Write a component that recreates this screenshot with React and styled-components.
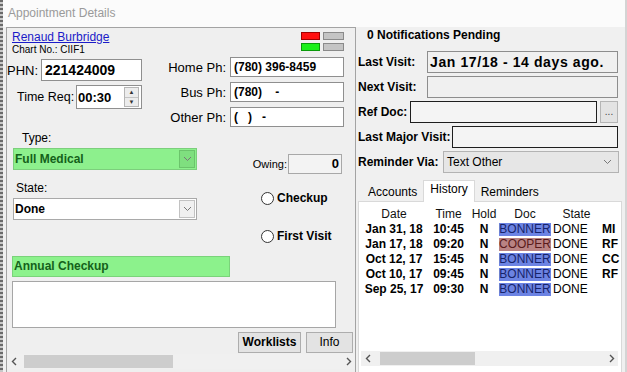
import React from "react";
import styled, { createGlobalStyle } from "styled-components";

const GlobalStyle = createGlobalStyle`
  html, body {
    margin: 0;
    padding: 0;
    background: #f0f0f0;
  }
  body {
    font-family: "Liberation Sans", Arial, sans-serif;
    color: #000;
  }
`;

const visits = [
  { date: "Jan 31, 18", time: "10:45", hold: "N", doc: "BONNER", state: "DONE", more: "MI" },
  { date: "Jan 17, 18", time: "09:20", hold: "N", doc: "COOPER", state: "DONE", more: "RF" },
  { date: "Oct 12, 17", time: "15:45", hold: "N", doc: "BONNER", state: "DONE", more: "CC" },
  { date: "Oct 10, 17", time: "09:45", hold: "N", doc: "BONNER", state: "DONE", more: "RF" },
  { date: "Sep 25, 17", time: "09:30", hold: "N", doc: "BONNER", state: "DONE", more: "" }
];

const Chevron = () => (
  <svg width="9" height="6" viewBox="0 0 9 6">
    <path d="M1 1 L4.5 4.5 L8 1" fill="none" stroke="#777" strokeWidth="1" />
  </svg>
);

const Arrow = ({ dir }) => (
  <svg width="6" height="9" viewBox="0 0 6 9">
    <path
      d={dir === "left" ? "M5 1 L1.5 4.5 L5 8" : "M1 1 L4.5 4.5 L1 8"}
      fill="none"
      stroke="#555"
      strokeWidth="1.4"
    />
  </svg>
);

const Scroll = ({ thumbLeft, thumbWidth }) => (
  <ScrollBar>
    <Arrow dir="left" />
    <ScrollTrack>
      <ScrollThumb style={{ marginLeft: thumbLeft, width: thumbWidth }} />
    </ScrollTrack>
    <Arrow dir="right" />
  </ScrollBar>
);

const Select = ({ value, green, width }) => (
  <SelectBox $green={green} $width={width}>
    <SelectText $green={green}>{value}</SelectText>
    <SelectButton $green={green}>
      <Chevron />
    </SelectButton>
  </SelectBox>
);

export default function App() {
  return (
    <>
      <GlobalStyle />
      <Window>
        <EdgeStrip />
        <Main>
          <TitleBar>Appointment Details</TitleBar>
          <Body>
            <LeftPanel>
              <TopSection>
                <PatientCol>
                  <NameLink>Renaud Burbridge</NameLink>
                  <ChartNo>Chart No.: CIIF1</ChartNo>
                  <PhnRow>
                    <PhnLabel>PHN:</PhnLabel>
                    <TextInput $width={101} $height={22} $bold $size={14}>
                      221424009
                    </TextInput>
                  </PhnRow>
                  <TimeRow>
                    <TimeLabel>Time Req:</TimeLabel>
                    <TimeInput>
                      <span>00:30</span>
                      <Spinner>
                        <SpinHalf>▲</SpinHalf>
                        <SpinHalf>▼</SpinHalf>
                      </Spinner>
                    </TimeInput>
                  </TimeRow>
                </PatientCol>
                <PhoneCol>
                  <Indicators>
                    <IndicatorRow>
                      <Flag $color="#ff1010" $edge="#a00000" />
                      <Flag $color="#c4c4c4" $edge="#8a8a8a" $wide />
                    </IndicatorRow>
                    <IndicatorRow>
                      <Flag $color="#19f019" $edge="#0a9a0a" />
                      <Flag $color="#c4c4c4" $edge="#8a8a8a" $wide />
                    </IndicatorRow>
                  </Indicators>
                  <PhoneRow>
                    <PhoneLabel>Home Ph:</PhoneLabel>
                    <TextInput $width={114} $height={20} $semi>(780) 396-8459</TextInput>
                  </PhoneRow>
                  <PhoneRow>
                    <PhoneLabel>Bus Ph:</PhoneLabel>
                    <TextInput $width={114} $height={20} $semi>(780)&nbsp;&nbsp;&nbsp;&nbsp;-</TextInput>
                  </PhoneRow>
                  <PhoneRow>
                    <PhoneLabel>Other Ph:</PhoneLabel>
                    <TextInput $width={114} $height={20} $semi>(&nbsp;&nbsp;&nbsp;)&nbsp;&nbsp;&nbsp;-</TextInput>
                  </PhoneRow>
                </PhoneCol>
              </TopSection>

              <MiddleSection>
                <TypeCol>
                  <SmallLabel $indent={9}>Type:</SmallLabel>
                  <Select value="Full Medical" green width={184} />
                  <SmallLabel $indent={3} $top={11}>State:</SmallLabel>
                  <Select value="Done" width={184} />
                </TypeCol>
                <OptionCol>
                  <OwingRow>
                    <OwingLabel>Owing:</OwingLabel>
                    <OwingBox>0</OwingBox>
                  </OwingRow>
                  <RadioRow $top={17}>
                    <RadioCircle />
                    Checkup
                  </RadioRow>
                  <RadioRow $top={24}>
                    <RadioCircle />
                    First Visit
                  </RadioRow>
                </OptionCol>
              </MiddleSection>

              <AnnualBar>Annual Checkup</AnnualBar>
              <NotesBox />
              <ButtonRow>
                <WinButton $bold $width={63}>Worklists</WinButton>
                <WinButton $width={47}>Info</WinButton>
              </ButtonRow>
              <Scroll thumbLeft={2} thumbWidth={149} />
            </LeftPanel>

            <RightPanel>
              <Notifications>0 Notifications Pending</Notifications>
              <FieldList>
                <FieldRow>
                  <FieldLabel $width={69}>Last Visit:</FieldLabel>
                  <FieldBox $big>Jan 17/18 - 14 days ago.</FieldBox>
                </FieldRow>
                <FieldRow>
                  <FieldLabel $width={69}>Next Visit:</FieldLabel>
                  <FieldBox />
                </FieldRow>
                <FieldRow>
                  <FieldLabel $width={52}>Ref Doc:</FieldLabel>
                  <FieldBox $dark />
                  <DotsButton>...</DotsButton>
                </FieldRow>
                <FieldRow>
                  <FieldLabel $width={94}>Last Major Visit:</FieldLabel>
                  <FieldBox $dark />
                </FieldRow>
                <FieldRow>
                  <FieldLabel $width={85}>Reminder Via:</FieldLabel>
                  <ReminderSelect>
                    <span>Text Other</span>
                    <Chevron />
                  </ReminderSelect>
                </FieldRow>
              </FieldList>

              <TabStrip>
                <Tab>Accounts</Tab>
                <Tab $active>History</Tab>
                <Tab>Reminders</Tab>
              </TabStrip>
              <TabBody>
                <HistoryTable>
                  <HeadCell>Date</HeadCell>
                  <HeadCell>Time</HeadCell>
                  <HeadCell>Hold</HeadCell>
                  <HeadCell>Doc</HeadCell>
                  <HeadCell>State</HeadCell>
                  <HeadCell />
                  {visits.map((v) => (
                    <React.Fragment key={v.date}>
                      <Cell $bold $center>{v.date}</Cell>
                      <Cell $bold $center>{v.time}</Cell>
                      <Cell $bold $center>{v.hold}</Cell>
                      <Cell>
                        <DocBadge $cooper={v.doc === "COOPER"}>{v.doc}</DocBadge>
                      </Cell>
                      <Cell $pad>{v.state}</Cell>
                      <Cell $bold>{v.more}</Cell>
                    </React.Fragment>
                  ))}
                </HistoryTable>
                <TableScroll>
                  <Scroll thumbLeft={4} thumbWidth={95} />
                </TableScroll>
              </TabBody>
            </RightPanel>
          </Body>
        </Main>
      </Window>
    </>
  );
}

const Window = styled.div`
  width: 627px;
  height: 372px;
  display: flex;
  overflow: hidden;
  background: #f0f0f0;
  font-size: 12px;
`;

const EdgeStrip = styled.div`
  width: 3px;
  background: repeating-linear-gradient(180deg, #6a6a6a 0 2px, #c8c8c8 2px 4px);
`;

const Main = styled.div`
  flex: 1;
  display: flex;
  flex-direction: column;
  border-right: 2px solid #d4d4d4;
`;

const TitleBar = styled.div`
  height: 27px;
  line-height: 26px;
  padding-left: 5px;
  background: #fbfbfb;
  color: #9a9a9a;
  font-size: 12px;
`;

const Body = styled.div`
  flex: 1;
  display: flex;
`;

const LeftPanel = styled.div`
  margin-left: 3px;
  width: 348px;
  border: 1px solid #a3a3a3;
  border-bottom: none;
  display: flex;
  flex-direction: column;
  background: #efefef;
`;

const TopSection = styled.div`
  display: flex;
  height: 102px;
`;

const PatientCol = styled.div`
  width: 145px;
  display: flex;
  flex-direction: column;
`;

const NameLink = styled.a`
  margin: 2px 0 0 5px;
  line-height: 14px;
  font-size: 12px;
  color: #1b1bc8;
  text-decoration: underline;
`;

const ChartNo = styled.div`
  margin-left: 5px;
  font-size: 10px;
  line-height: 11px;
`;

const PhnRow = styled.div`
  margin-top: 4px;
  display: flex;
  align-items: center;
`;

const PhnLabel = styled.span`
  width: 34px;
  font-size: 13px;
`;

const TextInput = styled.div`
  box-sizing: border-box;
  width: ${(p) => p.$width}px;
  height: ${(p) => p.$height}px;
  flex-shrink: 0;
  border: 1px solid #8f8f8f;
  background: #fff;
  padding-left: 3px;
  display: flex;
  align-items: center;
  font-size: ${(p) => p.$size || 12}px;
  font-weight: ${(p) => (p.$bold ? 700 : p.$semi ? 600 : 400)};
  white-space: pre;
`;

const TimeRow = styled.div`
  margin-top: 4px;
  padding-left: 10px;
  display: flex;
  align-items: center;
`;

const TimeLabel = styled.span`
  width: 59px;
  font-size: 12.5px;
  white-space: nowrap;
`;

const TimeInput = styled.div`
  box-sizing: border-box;
  width: 66px;
  height: 24px;
  flex-shrink: 0;
  border: 1px solid #8f8f8f;
  background: #fff;
  display: flex;
  align-items: center;
  justify-content: space-between;
  padding: 0 2px 0 1px;
  font-size: 13px;
  font-weight: 700;
`;

const Spinner = styled.div`
  width: 15px;
  height: 20px;
  display: flex;
  flex-direction: column;
  border: 1px solid #b5b5b5;
  box-sizing: border-box;
`;

const SpinHalf = styled.div`
  flex: 1;
  display: flex;
  align-items: center;
  justify-content: center;
  font-size: 6px;
  color: #333;
  background: #ececec;
  & + & {
    border-top: 1px solid #c4c4c4;
  }
`;

const PhoneCol = styled.div`
  flex: 1;
  display: flex;
  flex-direction: column;
  padding-right: 11px;
`;

const Indicators = styled.div`
  margin-top: 4px;
  display: flex;
  flex-direction: column;
  align-items: flex-end;
  gap: 3px;
`;

const IndicatorRow = styled.div`
  display: flex;
  gap: 3px;
`;

const Flag = styled.div`
  box-sizing: border-box;
  width: ${(p) => (p.$wide ? 21 : 19)}px;
  height: 8px;
  background: ${(p) => p.$color};
  border: 1px solid ${(p) => p.$edge};
`;

const PhoneRow = styled.div`
  display: flex;
  justify-content: flex-end;
  align-items: center;
  margin-top: 5px;
  &:nth-of-type(2) {
    margin-top: 6px;
  }
`;

const PhoneLabel = styled.span`
  font-size: 13px;
  margin-right: 4px;
`;

const MiddleSection = styled.div`
  display: flex;
  height: 120px;
`;

const TypeCol = styled.div`
  width: 190px;
  padding-left: 6px;
  display: flex;
  flex-direction: column;
  align-items: flex-start;
`;

const SmallLabel = styled.div`
  margin: ${(p) => p.$top || 1}px 0 3px ${(p) => p.$indent}px;
  line-height: 14px;
  font-size: 12px;
`;

const SelectBox = styled.div`
  box-sizing: border-box;
  width: ${(p) => p.$width}px;
  height: 22px;
  display: flex;
  align-items: center;
  background: ${(p) => (p.$green ? "#8df08d" : "#fff")};
  border: 1px solid ${(p) => (p.$green ? "#7ccf7c" : "#a9a9a9")};
`;

const SelectText = styled.span`
  flex: 1;
  padding-left: 1px;
  font-size: 12px;
  font-weight: 700;
  color: ${(p) => (p.$green ? "#14611a" : "#000")};
`;

const SelectButton = styled.div`
  box-sizing: border-box;
  width: 16px;
  height: 18px;
  margin-right: 1px;
  display: flex;
  align-items: center;
  justify-content: center;
  background: ${(p) => (p.$green ? "#7fdf7f" : "#f0f0f0")};
  border: 1px solid ${(p) => (p.$green ? "#6bc46b" : "#c2c2c2")};
`;

const OptionCol = styled.div`
  flex: 1;
  display: flex;
  flex-direction: column;
  padding-right: 13px;
`;

const OwingRow = styled.div`
  margin-top: 24px;
  display: flex;
  justify-content: flex-end;
  align-items: center;
`;

const OwingLabel = styled.span`
  font-size: 11px;
  margin-right: 1px;
`;

const OwingBox = styled.div`
  box-sizing: border-box;
  width: 54px;
  height: 20px;
  border: 1px solid #a8a8a8;
  background: #f3f3f3;
  text-align: right;
  padding-right: 2px;
  line-height: 18px;
  font-size: 13px;
  font-weight: 700;
`;

const RadioRow = styled.div`
  margin: ${(p) => p.$top}px 0 0 58px;
  display: flex;
  align-items: center;
  gap: 3px;
  font-size: 12px;
  font-weight: 700;
  height: 14px;
`;

const RadioCircle = styled.span`
  box-sizing: border-box;
  width: 13px;
  height: 13px;
  border-radius: 50%;
  border: 1px solid #333;
  background: #fff;
`;

const AnnualBar = styled.div`
  margin: 6px 0 0 5px;
  box-sizing: border-box;
  width: 218px;
  height: 21px;
  background: #8cf28c;
  border: 1px solid #7ad37a;
  color: #14611a;
  font-size: 12px;
  font-weight: 700;
  line-height: 19px;
  padding-left: 1px;
`;

const NotesBox = styled.div`
  margin: 4px 0 0 5px;
  box-sizing: border-box;
  width: 324px;
  height: 47px;
  background: #fff;
  border: 1px solid #a6a6a6;
`;

const ButtonRow = styled.div`
  margin-top: 4px;
  display: flex;
  justify-content: flex-end;
  gap: 5px;
  padding-right: 2px;
`;

const WinButton = styled.div`
  box-sizing: border-box;
  width: ${(p) => p.$width}px;
  height: 21px;
  border: 1px solid #adadad;
  background: #e3e3e3;
  text-align: center;
  line-height: 19px;
  font-size: 12px;
  font-weight: ${(p) => (p.$bold ? 700 : 400)};
`;

const ScrollBar = styled.div`
  height: 15px;
  margin-top: 1px;
  display: flex;
  align-items: center;
  padding: 0 3px 0 4px;
  gap: 5px;
  background: #f0f0f0;
`;

const ScrollTrack = styled.div`
  flex: 1;
  height: 13px;
  display: flex;
`;

const ScrollThumb = styled.div`
  height: 13px;
  background: #cdcdcd;
`;

const RightPanel = styled.div`
  flex: 1;
  margin-left: 2px;
  margin-right: 1px;
  display: flex;
  flex-direction: column;
`;

const Notifications = styled.div`
  margin: 1px 0 0 9px;
  line-height: 14px;
  font-size: 12px;
  font-weight: 700;
`;

const FieldList = styled.div`
  margin-top: 9px;
  display: flex;
  flex-direction: column;
  gap: 3px;
  padding-right: 6px;
`;

const FieldRow = styled.div`
  display: flex;
  align-items: center;
  height: 22px;
`;

const FieldLabel = styled.span`
  width: ${(p) => p.$width}px;
  font-size: 12px;
  font-weight: 700;
  flex-shrink: 0;
`;

const FieldBox = styled.div`
  flex: 1;
  box-sizing: border-box;
  height: 22px;
  border: 1px solid ${(p) => (p.$dark ? "#1e1e1e" : "#8d8d8d")};
  background: ${(p) => (p.$dark ? "#f4f4f4" : "#f0f0f0")};
  padding-left: 2px;
  line-height: 20px;
  font-size: 14px;
  font-weight: 700;
  white-space: nowrap;
  overflow: hidden;
  letter-spacing: ${(p) => (p.$big ? "0.6px" : "0")};
`;

const DotsButton = styled.div`
  box-sizing: border-box;
  width: 18px;
  height: 22px;
  margin-left: 3px;
  border: 1px solid #b5b5b5;
  background: #e3e3e3;
  text-align: center;
  line-height: 19px;
  font-size: 10px;
  color: #444;
`;

const ReminderSelect = styled.div`
  flex: 1;
  box-sizing: border-box;
  height: 22px;
  border: 1px solid #b3b3b3;
  background: #e6e6e6;
  display: flex;
  align-items: center;
  justify-content: space-between;
  padding: 0 6px 0 3px;
  font-size: 12px;
  margin-right: -1px;
`;

const TabStrip = styled.div`
  margin-top: 6px;
  height: 22px;
  display: flex;
  align-items: flex-end;
  padding-left: 4px;
`;

const Tab = styled.div`
  box-sizing: border-box;
  height: ${(p) => (p.$active ? 22 : 20)}px;
  padding: 0 ${(p) => (p.$active ? 6 : 5)}px;
  line-height: ${(p) => (p.$active ? 17 : 21)}px;
  font-size: 12px;
  background: ${(p) => (p.$active ? "#fff" : "transparent")};
  border: 1px solid ${(p) => (p.$active ? "#d9d9d9" : "transparent")};
  border-bottom: none;
  margin-bottom: ${(p) => (p.$active ? -1 : 0)}px;
  position: relative;
`;

const TabBody = styled.div`
  flex: 1;
  margin-right: 2px;
  background: #fff;
  border: 1px solid #d9d9d9;
  border-bottom: none;
  display: flex;
  flex-direction: column;
`;

const HistoryTable = styled.div`
  display: grid;
  grid-template-columns: 68px 41px 30px 52px 51px 1fr;
  grid-auto-rows: 15px;
  padding: 5px 0 0 1px;
  font-size: 12px;
  flex: 1;
  align-content: start;
  overflow: hidden;
`;

const HeadCell = styled.div`
  text-align: center;
  line-height: 15px;
  color: #111;
`;

const Cell = styled.div`
  line-height: 15px;
  white-space: nowrap;
  overflow: hidden;
  text-align: ${(p) => (p.$center ? "center" : "left")};
  font-weight: ${(p) => (p.$bold ? 700 : 400)};
  padding-left: ${(p) => (p.$pad ? 2 : 0)}px;
`;

const DocBadge = styled.span`
  display: block;
  height: 13px;
  margin-top: 1px;
  line-height: 13px;
  background: ${(p) => (p.$cooper ? "#b98383" : "#6c83e3")};
  color: ${(p) => (p.$cooper ? "#5a1b1b" : "#17246a")};
  text-align: center;
`;

const TableScroll = styled.div`
  padding: 0 3px 6px 2px;
`;
